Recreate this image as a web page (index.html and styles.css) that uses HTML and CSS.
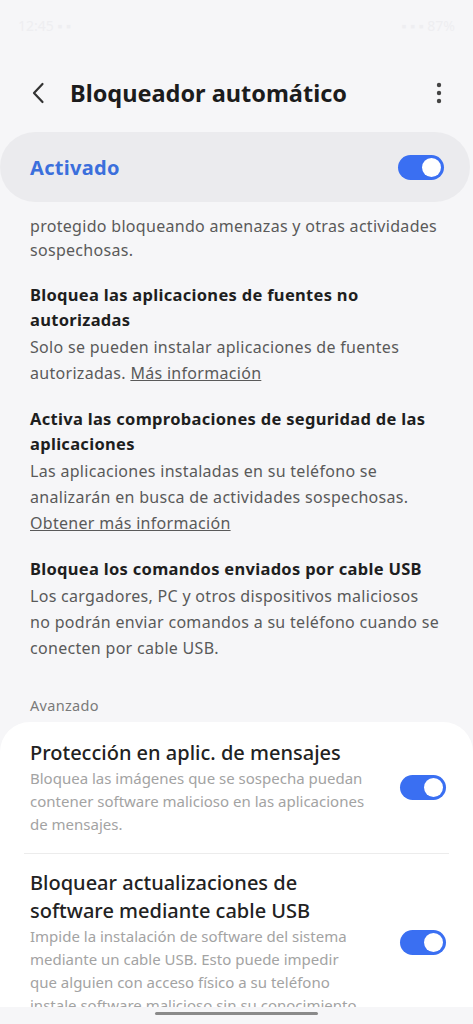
FILE: index.html
```html
<!DOCTYPE html>
<html>
<head>
    <title>Bloqueador automático</title>
    <link rel="stylesheet" href="styles.css">
</head>
<body>
    <div class="screen">
        <div class="status">
            <span class="status-left">12:45 ▪ ▪</span>
            <span class="status-right">▪ ▪ ▪ 87%</span>
        </div>

        <div class="appbar">
            <svg class="back" width="14" height="22" viewBox="0 0 14 22">
                <path d="M11.5 2 L3 11 L11.5 20" fill="none" stroke="#333" stroke-width="2.2" stroke-linecap="round" stroke-linejoin="round"/>
            </svg>
            <h1 class="title">Bloqueador automático</h1>
            <svg class="more" width="6" height="22" viewBox="0 0 6 22">
                <circle cx="3" cy="3" r="2.2" fill="#444"/>
                <circle cx="3" cy="11" r="2.2" fill="#444"/>
                <circle cx="3" cy="19" r="2.2" fill="#444"/>
            </svg>
        </div>

        <div class="master">
            <span class="master-label">Activado</span>
            <span class="switch"><span class="knob"></span></span>
        </div>

        <div class="scroll">
            <div class="scroll-inner">
                <p class="desc">protegido bloqueando amenazas y otras actividades sospechosas.</p>

                <div class="feature">
                    <h2>Bloquea las aplicaciones de fuentes no autorizadas</h2>
                    <p class="desc">Solo se pueden instalar aplicaciones de fuentes autorizadas. <a href="#">Más información</a></p>
                </div>

                <div class="feature">
                    <h2>Activa las comprobaciones de seguridad de las aplicaciones</h2>
                    <p class="desc">Las aplicaciones instaladas en su teléfono se analizarán en busca de actividades sospechosas. <a href="#">Obtener más información</a></p>
                </div>

                <div class="feature">
                    <h2>Bloquea los comandos enviados por cable USB</h2>
                    <p class="desc">Los cargadores, PC y otros dispositivos maliciosos no podrán enviar comandos a su teléfono cuando se conecten por cable USB.</p>
                </div>

                <div class="section-label">Avanzado</div>

                <div class="card">
                    <div class="row">
                        <div class="row-text">
                            <div class="row-title">Protección en aplic. de mensajes</div>
                            <div class="row-desc">Bloquea las imágenes que se sospecha puedan contener software malicioso en las aplicaciones de mensajes.</div>
                        </div>
                        <span class="switch"><span class="knob"></span></span>
                    </div>
                    <div class="divider"></div>
                    <div class="row">
                        <div class="row-text">
                            <div class="row-title">Bloquear actualizaciones de software mediante cable USB</div>
                            <div class="row-desc">Impide la instalación de software del sistema mediante un cable USB. Esto puede impedir que alguien con acceso físico a su teléfono instale software malicioso sin su conocimiento.</div>
                        </div>
                        <span class="switch"><span class="knob"></span></span>
                    </div>
                </div>
            </div>
        </div>

        <div class="navbar"><span class="handle"></span></div>
    </div>
</body>
</html>
```

FILE: styles.css
```css
body {
    margin: 0;
    font-family: "Noto Sans", Roboto, sans-serif;
    background-color: #f6f6f8;
}
.screen {
    position: relative;
    width: 473px;
    height: 1024px;
    overflow: hidden;
    display: flex;
    flex-direction: column;
    background-color: #f6f6f8;
}
.status {
    height: 50px;
    flex: none;
    display: flex;
    justify-content: space-between;
    align-items: center;
    padding: 0 18px;
    font-size: 14px;
    color: #eeeef1;
}
.appbar {
    height: 78px;
    flex: none;
    padding-top: 4px;
    display: flex;
    align-items: center;
    padding-left: 31px;
    padding-right: 31px;
}
.back {
    margin-right: 25px;
}
.title {
    flex: 1;
    margin: 0;
    font-size: 23.5px;
    font-weight: 700;
    color: #1c1c1c;
}
.master {
    height: 70px;
    flex: none;
    margin-right: 3px;
    border-radius: 35px;
    background-color: #ebebee;
    display: flex;
    align-items: center;
    justify-content: space-between;
    padding: 0 26px 0 30px;
}
.master-label {
    font-size: 20px;
    font-weight: 700;
    color: #3b6fdc;
    letter-spacing: 0.3px;
}
.switch {
    position: relative;
    flex: none;
    width: 46px;
    height: 25px;
    border-radius: 13px;
    background-color: #3a6ff2;
}
.knob {
    position: absolute;
    right: 3px;
    top: 3px;
    width: 19px;
    height: 19px;
    border-radius: 50%;
    background-color: #fff;
}
.scroll {
    flex: 1;
    overflow: hidden;
    margin-top: 17px;
}
.scroll-inner {
    margin-top: -5.5px;
}
.desc {
    margin: 0;
    padding: 0 30px;
    font-size: 16px;
    line-height: 26px;
    letter-spacing: 0.3px;
    color: #5a5a5a;
}
.scroll-inner > .desc {
    line-height: 24px;
}
.feature {
    margin-top: 20px;
}
.feature h2 {
    margin: 0;
    padding: 0 30px;
    font-size: 16.5px;
    line-height: 25px;
    font-weight: 700;
    letter-spacing: 0.3px;
    color: #1e1e1e;
}
.feature .desc {
    margin-top: 2px;
}
.desc a {
    color: #5a5a5a;
    text-decoration: underline;
}
.section-label {
    margin-top: 34px;
    padding: 0 30px;
    font-size: 14.5px;
    line-height: 20px;
    letter-spacing: 0.3px;
    color: #7a7a7a;
}
.card {
    margin-top: 7px;
    background-color: #fff;
    border-radius: 30px 30px 0 0;
    padding-top: 17px;
}
.row {
    display: flex;
    align-items: center;
    padding: 0 27px 0 30px;
}
.row-text {
    flex: 1;
    padding-right: 31px;
}
.row-title {
    font-size: 20px;
    line-height: 28px;
    color: #222;
    font-weight: 500;
}
.row-desc {
    margin-top: 0;
    font-size: 15px;
    line-height: 23px;
    color: #a3a3a3;
}
.divider {
    height: 1px;
    margin: 17px 24px 15px 24px;
    background-color: #ececec;
}
.navbar {
    position: absolute;
    left: 0;
    right: 0;
    bottom: 0;
    height: 17px;
    background-color: #f6f6f8;
    display: flex;
    justify-content: center;
    align-items: flex-start;
}
.handle {
    margin-top: 5px;
    width: 163px;
    height: 3px;
    border-radius: 2px;
    background-color: #8a8a8a;
}
```
